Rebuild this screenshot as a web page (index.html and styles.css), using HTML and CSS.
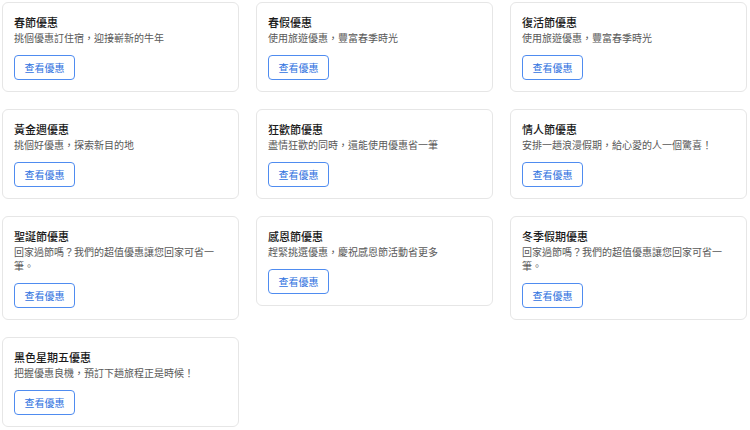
FILE: index.html
```html
<!DOCTYPE html>
<html lang="zh-Hant">
<head>
<meta charset="utf-8">
<title>優惠</title>
<link rel="stylesheet" href="styles.css">
</head>
<body>
<div class="grid">
  <div class="card">
    <div class="title">春節優惠</div>
    <div class="desc">挑個優惠訂住宿，迎接嶄新的牛年</div>
    <button class="btn">查看優惠</button>
  </div>
  <div class="card">
    <div class="title">春假優惠</div>
    <div class="desc">使用旅遊優惠，豐富春季時光</div>
    <button class="btn">查看優惠</button>
  </div>
  <div class="card">
    <div class="title">復活節優惠</div>
    <div class="desc">使用旅遊優惠，豐富春季時光</div>
    <button class="btn">查看優惠</button>
  </div>
  <div class="card">
    <div class="title">黃金週優惠</div>
    <div class="desc">挑個好優惠，探索新目的地</div>
    <button class="btn">查看優惠</button>
  </div>
  <div class="card">
    <div class="title">狂歡節優惠</div>
    <div class="desc">盡情狂歡的同時，還能使用優惠省一筆</div>
    <button class="btn">查看優惠</button>
  </div>
  <div class="card">
    <div class="title">情人節優惠</div>
    <div class="desc">安排一趟浪漫假期，給心愛的人一個驚喜！</div>
    <button class="btn">查看優惠</button>
  </div>
  <div class="card">
    <div class="title">聖誕節優惠</div>
    <div class="desc">回家過節嗎？我們的超值優惠讓您回家可省一筆。</div>
    <button class="btn">查看優惠</button>
  </div>
  <div class="card">
    <div class="title">感恩節優惠</div>
    <div class="desc">趕緊挑選優惠，慶祝感恩節活動省更多</div>
    <button class="btn">查看優惠</button>
  </div>
  <div class="card">
    <div class="title">冬季假期優惠</div>
    <div class="desc">回家過節嗎？我們的超值優惠讓您回家可省一筆。</div>
    <button class="btn">查看優惠</button>
  </div>
  <div class="card">
    <div class="title">黑色星期五優惠</div>
    <div class="desc">把握優惠良機，預訂下趟旅程正是時候！</div>
    <button class="btn">查看優惠</button>
  </div>
</div>
</body>
</html>
```
FILE: styles.css
```css
html, body {
  margin: 0;
  padding: 0;
  background: #ffffff;
}
body {
  font-family: "Noto Sans CJK TC", "Noto Sans", sans-serif;
  color: #222222;
}
.grid {
  display: grid;
  grid-template-columns: repeat(3, 1fr);
  column-gap: 17px;
  row-gap: 17px;
  padding: 2px 3px 0 2px;
  align-items: start;
}
.card {
  border: 1px solid #e6e6e6;
  border-radius: 6px;
  padding: 11px;
  display: flex;
  flex-direction: column;
  align-items: flex-start;
}
.title {
  font-size: 11px;
  line-height: 16px;
  font-weight: 500;
  color: #1a1a1a;
}
.desc {
  margin-top: 1px;
  font-size: 10px;
  line-height: 14px;
  color: #585858;
}
.btn {
  margin-top: 10px;
  width: 61px;
  height: 25px;
  padding: 0;
  border: 1px solid #4f8cf0;
  border-radius: 4px;
  background: #ffffff;
  color: #2f72e0;
  font-family: "Noto Sans CJK TC", "Noto Sans", sans-serif;
  font-size: 10px;
  line-height: 23px;
  text-align: center;
}
```
